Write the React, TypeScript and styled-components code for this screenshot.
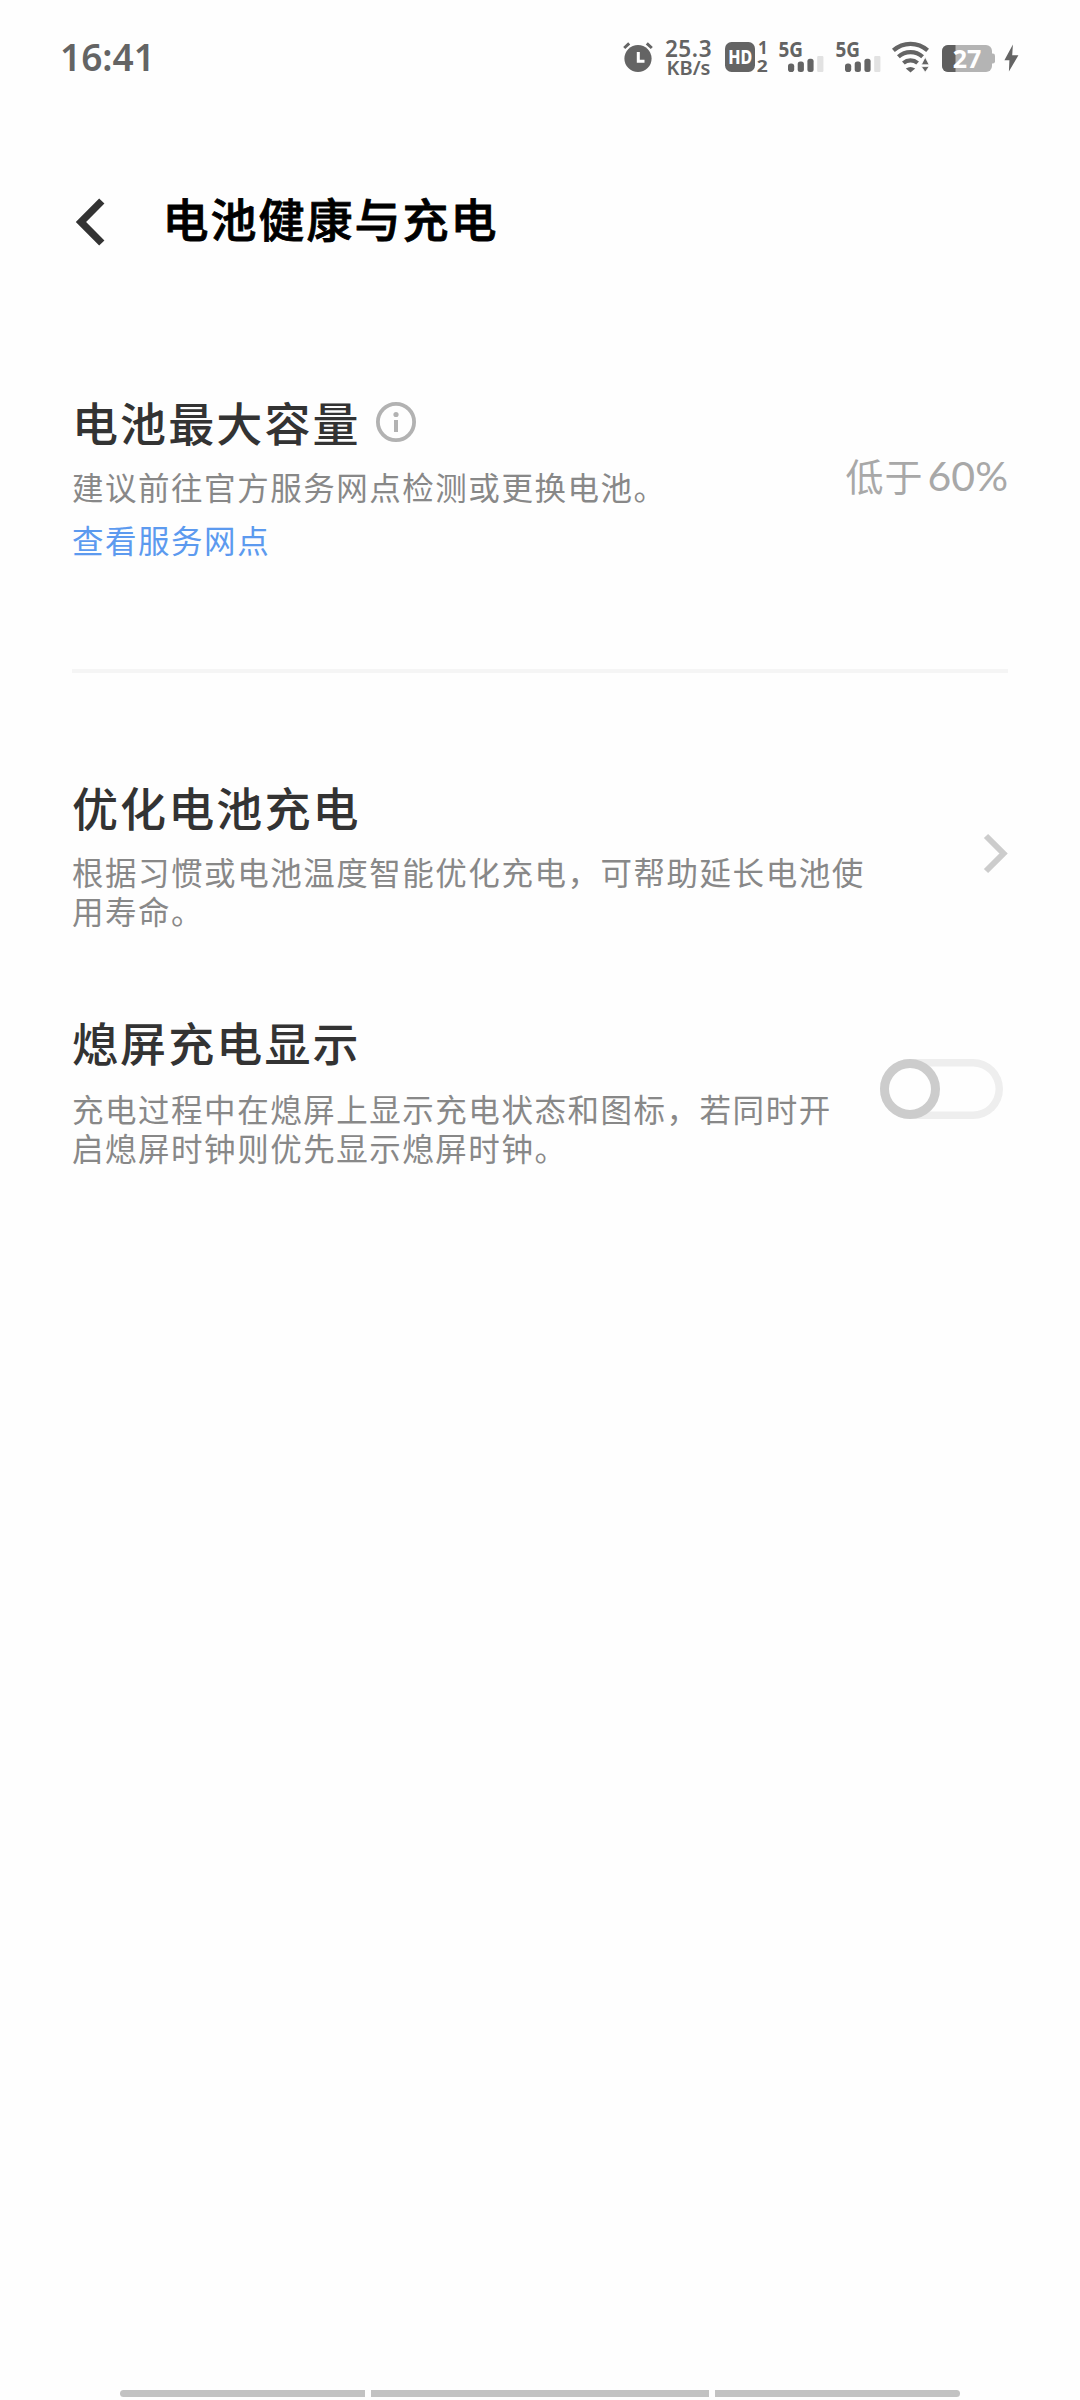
import React, { useState } from "react";
import styled, { createGlobalStyle } from "styled-components";

const GlobalStyle = createGlobalStyle`
  * { box-sizing: border-box; }
  html, body { margin: 0; padding: 0; background: #fefefe; }
  body { font-family: "Noto Sans CJK SC", "Noto Sans", sans-serif; }
`;

const Screen = styled.div`
  width: 1080px;
  height: 2400px;
  display: flex;
  flex-direction: column;
  background: #fefefe;
  overflow: hidden;
`;

const StatusBar = styled.header`
  height: 114px;
  flex: none;
  display: flex;
  align-items: center;
  justify-content: space-between;
  padding: 0 61px 0 60px;
  color: #646464;
  font-family: "Noto Sans", sans-serif;
`;

const Clock = styled.span`
  font-size: 37px;
  font-weight: 600;
  line-height: 50px;
  letter-spacing: 0;
`;

const StatusIcons = styled.div`
  display: flex;
  align-items: center;
`;

const Glyph = styled.svg<{ $left?: number }>`
  display: block;
  flex: none;
  margin-left: ${(p) => p.$left ?? 0}px;
  overflow: visible;
`;

const NetSpeed = styled.div`
  width: 45px;
  margin-left: 13px;
  padding-top: 1px;
  display: flex;
  flex-direction: column;
  align-items: center;
  white-space: nowrap;
  font-weight: 600;
`;

const Speed = styled.span`
  font-size: 22.5px;
  line-height: 20px;
  letter-spacing: 0.6px;
`;

const Unit = styled.span`
  font-size: 20px;
  font-weight: 600;
  line-height: 18px;
`;

const TitleBar = styled.div`
  height: 216px;
  flex: none;
  display: flex;
  align-items: center;
  gap: 57.5px;
  padding-left: 75px;
`;

const IconButton = styled.button`
  display: flex;
  padding: 0;
  border: 0;
  background: none;
`;

const PageTitle = styled.h1`
  margin: 0;
  padding-bottom: 10px;
  font-size: 46px;
  font-weight: 500;
  line-height: 54px;
  letter-spacing: 2px;
  color: #000;
  -webkit-text-stroke: 0.8px #000;
`;

const List = styled.main`
  flex: 1;
  display: flex;
  flex-direction: column;
  padding: 64px 72px 0;
`;

const Row = styled.section<{ $top?: number; $right?: number }>`
  display: flex;
  align-items: center;
  justify-content: space-between;
  margin-top: ${(p) => p.$top ?? 0}px;
  padding-right: ${(p) => p.$right ?? 0}px;
`;

const Copy = styled.div<{ $width?: number }>`
  width: ${(p) => (p.$width ? p.$width + "px" : "auto")};
  flex: none;
`;

const Heading = styled.h2`
  display: flex;
  align-items: center;
  gap: 15px;
  margin: 0;
  font-size: 46px;
  font-weight: 500;
  line-height: 54px;
  letter-spacing: 2.1px;
  color: #333;
  white-space: nowrap;
`;

const Body = styled.p<{ $gap?: number }>`
  margin: ${(p) => p.$gap ?? 19}px 0 0;
  font-size: 31.5px;
  line-height: 39px;
  letter-spacing: 1.53px;
  color: #888;
`;

const Link = styled.a`
  display: block;
  margin-top: 14px;
  font-size: 31.5px;
  line-height: 39px;
  letter-spacing: 1.53px;
  color: #5c9aef;
`;

const Value = styled.span`
  padding-bottom: 3px;
  font-size: 38px;
  line-height: 50px;
  letter-spacing: 1px;
  color: #a8a8a8;
  white-space: nowrap;
`;

const Latin = styled.span`
  margin-left: 4px;
  font-family: Lato, sans-serif;
  font-size: 41px;
  letter-spacing: 0;
`;

const Divider = styled.hr`
  width: 100%;
  height: 4px;
  flex: none;
  margin: 110px 0 0;
  border: 0;
  background: #f5f5f5;
`;

const Track = styled.button<{ $on: boolean }>`
  width: 123px;
  height: 60px;
  margin-bottom: 4px;
  padding: 0;
  display: flex;
  justify-content: ${(p) => (p.$on ? "flex-end" : "flex-start")};
  border: 0;
  border-radius: 30px;
  background: transparent;
  box-shadow: inset 0 0 0 7.5px #eee;
`;

const Knob = styled.span`
  width: 60px;
  height: 60px;
  border: 9px solid #ccc;
  border-radius: 50%;
  background: #fefefe;
`;

const NavBar = styled.nav`
  flex: none;
  display: flex;
  justify-content: center;
  gap: 6px;
  padding-bottom: 3px;
`;

const NavPill = styled.span<{ $width: number; $radius?: string }>`
  width: ${(p) => p.$width}px;
  height: 7px;
  border-radius: ${(p) => p.$radius ?? "0"};
  background: #c2c2c2;
`;

const AlarmIcon = () => (
  <Glyph width="30" height="32" viewBox="0 0 30 32">
    <circle cx="15" cy="17.5" r="13.6" fill="#646464" />
    <path d="M1.2 7 6.2 2.4M28.8 7 23.8 2.4" stroke="#646464" strokeWidth="3" fill="none" />
    <path d="M15.3 11v9.2h6.2" stroke="#fff" strokeWidth="3" fill="none" />
  </Glyph>
);

const HdIcon = () => (
  <Glyph $left={14} width="43" height="32" viewBox="0 0 43 32">
    <rect x="0" y="1" width="30" height="30" rx="6.5" fill="#646464" />
    <text x="3.2" y="23.3" fontSize="20" fontWeight="800" fill="#fff" textLength="24" lengthAdjust="spacingAndGlyphs">HD</text>
    <text x="37.8" y="13" textAnchor="middle" fontSize="17" fontWeight="700" fill="#646464">1</text>
    <text x="31.8" y="30.6" fontSize="16.5" fontWeight="700" fill="#646464" textLength="11" lengthAdjust="spacingAndGlyphs">2</text>
  </Glyph>
);

const SignalIcon = ({ left }: { left: number }) => (
  <Glyph $left={left} width="45" height="32" viewBox="0 0 45 32">
    <text x="-0.5" y="16" fontSize="20.5" fontWeight="700" fill="#646464" textLength="24.5" lengthAdjust="spacingAndGlyphs">5G</text>
    <rect x="9" y="22.5" width="6.2" height="8.5" rx="2.8" fill="#646464" />
    <rect x="18.7" y="20.5" width="6.2" height="10.5" rx="2.5" fill="#646464" />
    <rect x="28.4" y="17.7" width="6.2" height="13.3" rx="2.5" fill="#646464" />
    <rect x="38.2" y="15" width="6.2" height="16" rx="1" fill="#e2e2e2" />
  </Glyph>
);

const WifiIcon = () => (
  <Glyph $left={11} width="38" height="32" viewBox="0 0 38 32">
    <g fill="none" stroke="#646464" strokeWidth="4.2">
      <path d="M1.4 9.4a25.5 25.5 0 0 1 34.2 0" />
      <path d="M6.4 15.8a18 18 0 0 1 24.2 0" />
      <path d="M11.4 22a11 11 0 0 1 14.2 0" />
    </g>
    <path d="M13.8 27.4q4.7-3 9.4 0L18.5 31.6z" fill="#646464" />
    <path d="M29.3 23.8 33.2 16.2 37.2 23.8zM29.3 25.6h7.9L33.2 31.2z" fill="#646464" stroke="#fefefe" strokeWidth=".8" />
  </Glyph>
);

const BatteryIcon = ({ level }: { level: number }) => (
  <Glyph $left={11} width="55" height="32" viewBox="0 0 55 32">
    <clipPath id="cell">
      <rect x="1" y="4" width="50" height="27" rx="6" />
    </clipPath>
    <rect x="49" y="12.5" width="5" height="10" rx="2.2" fill="#b4b4b4" />
    <g clipPath="url(#cell)">
      <rect x="1" y="4" width="50" height="27" fill="#b4b4b4" />
      <rect x="1" y="4" width={level * 0.5} height="27" fill="#5f5f5f" />
    </g>
    <text x="26" y="26.5" textAnchor="middle" fontSize="25" fontWeight="700" fill="#fff">{level}</text>
  </Glyph>
);

const BoltIcon = () => (
  <Glyph $left={8} width="15" height="32" viewBox="0 0 15 32">
    <path d="M8.9 3.5 0.4 19.2h5L4.9 30.6 14.4 14.3H8.2z" fill="#646464" />
  </Glyph>
);

export default function App() {
  const [alwaysOn, setAlwaysOn] = useState(false);

  return (
    <Screen>
      <GlobalStyle />
      <StatusBar>
        <Clock>16:41</Clock>
        <StatusIcons>
          <AlarmIcon />
          <NetSpeed>
            <Speed>25.3</Speed>
            <Unit>KB/s</Unit>
          </NetSpeed>
          <HdIcon />
          <SignalIcon left={11} />
          <SignalIcon left={12} />
          <WifiIcon />
          <BatteryIcon level={27} />
          <BoltIcon />
        </StatusIcons>
      </StatusBar>

      <TitleBar>
        <IconButton aria-label="返回">
          <Glyph width="30" height="48" viewBox="0 0 30 48">
            <path d="M26.8 3 6 24l20.8 21" fill="none" stroke="#333" strokeWidth="7.4" />
          </Glyph>
        </IconButton>
        <PageTitle>电池健康与充电</PageTitle>
      </TitleBar>

      <List>
        <Row>
          <Copy>
            <Heading>
              电池最大容量
              <Glyph width="40" height="40" viewBox="0 -1 40 40">
                <circle cx="20" cy="20" r="18.1" fill="none" stroke="#b2b2b2" strokeWidth="3.8" />
                <circle cx="20" cy="12.5" r="2.6" fill="#b2b2b2" />
                <path d="M20 18v12" stroke="#b2b2b2" strokeWidth="4" />
              </Glyph>
            </Heading>
            <Body>建议前往官方服务网点检测或更换电池。</Body>
            <Link>查看服务网点</Link>
          </Copy>
          <Value>
            低于<Latin>60%</Latin>
          </Value>
        </Row>

        <Divider />

        <Row $top={106}>
          <Copy $width={796}>
            <Heading>优化电池充电</Heading>
            <Body>根据习惯或电池温度智能优化充电，可帮助延长电池使用寿命。</Body>
          </Copy>
          <Glyph width="25" height="40" viewBox="0 1.5 25 40">
            <path d="M3 2.5 20.5 20 3 37.5" fill="none" stroke="#ccc" strokeWidth="6" />
          </Glyph>
        </Row>

        <Row $top={84} $right={5}>
          <Copy $width={762}>
            <Heading>熄屏充电显示</Heading>
            <Body $gap={21}>充电过程中在熄屏上显示充电状态和图标，若同时开启熄屏时钟则优先显示熄屏时钟。</Body>
          </Copy>
          <Track role="switch" aria-checked={alwaysOn} aria-label="熄屏充电显示" $on={alwaysOn} onClick={() => setAlwaysOn(!alwaysOn)}>
            <Knob />
          </Track>
        </Row>
      </List>

      <NavBar>
        <NavPill $width={245} $radius="4px 0 0 4px" />
        <NavPill $width={338} />
        <NavPill $width={245} $radius="0 4px 4px 0" />
      </NavBar>
    </Screen>
  );
}
